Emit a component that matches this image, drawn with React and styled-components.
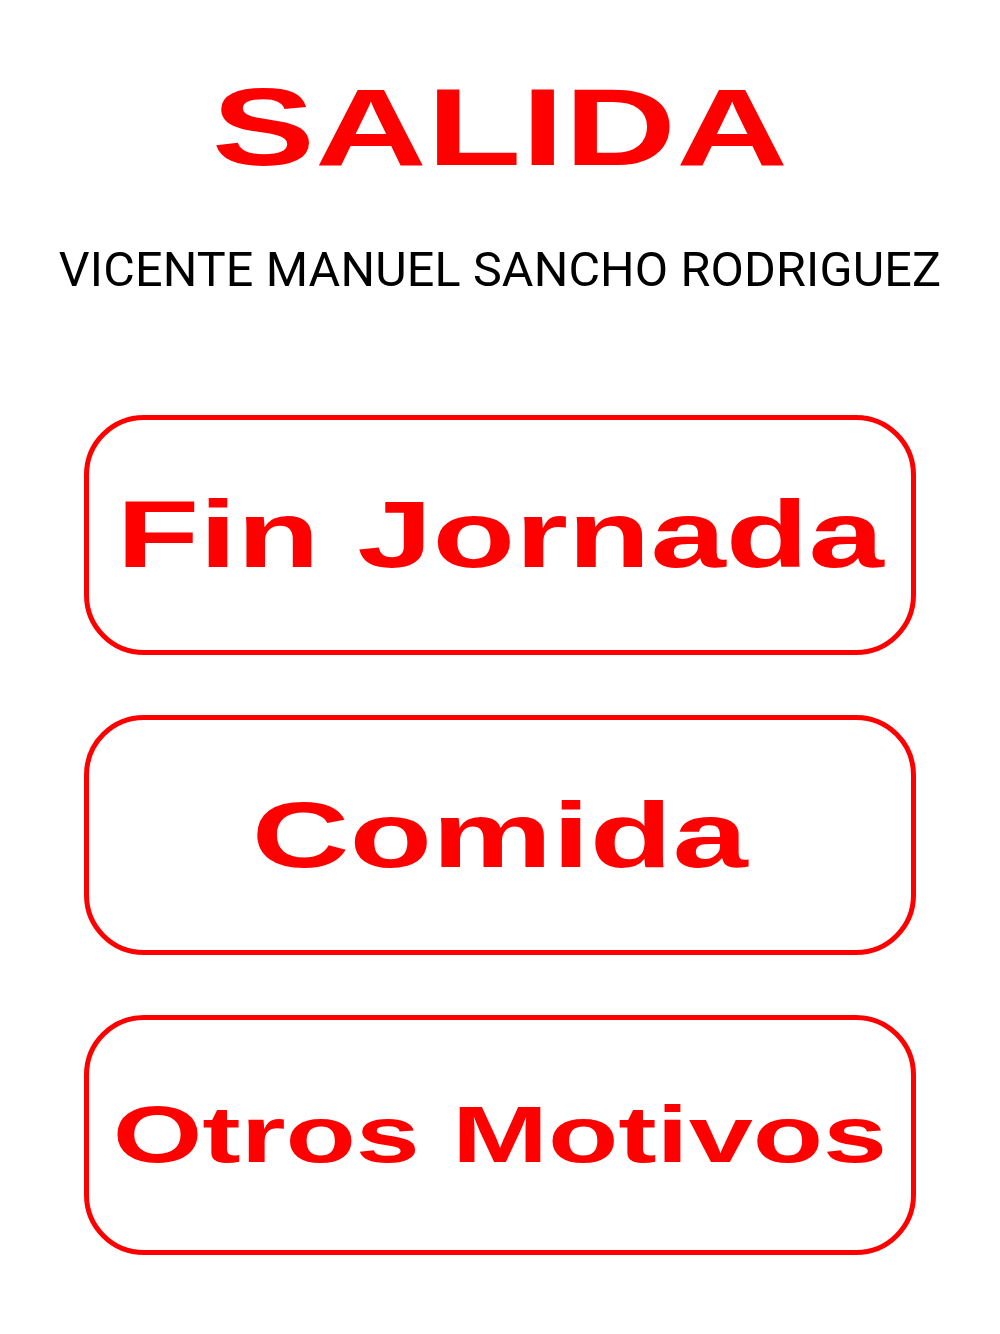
import React from "react";
import styled, { createGlobalStyle } from "styled-components";

const GlobalStyle = createGlobalStyle`
  html, body {
    margin: 0;
    padding: 0;
    background: #ffffff;
  }
  body {
    font-family: "Liberation Sans", Arial, sans-serif;
  }
`;

const Page = styled.div`
  width: 1000px;
  min-height: 1334px;
  display: flex;
  flex-direction: column;
  align-items: center;
  padding-top: 73px;
  box-sizing: border-box;
  background: #ffffff;
`;

const Title = styled.h1`
  margin: 0;
  font-family: "Liberation Sans", Arial, sans-serif;
  font-weight: 700;
  font-size: 109px;
  line-height: 1;
  color: #ff0000;
  transform: scaleX(1.42);
  letter-spacing: 0;
`;

const Name = styled.div`
  margin-top: 64px;
  font-family: Roboto, "Liberation Sans", sans-serif;
  font-size: 48.5px;
  letter-spacing: 0.15px;
  line-height: 1;
  color: #000000;
  white-space: nowrap;
`;

const ButtonList = styled.div`
  margin-top: 120px;
  display: flex;
  flex-direction: column;
  gap: 60px;
`;

const ActionButton = styled.button`
  width: 832px;
  height: 240px;
  box-sizing: border-box;
  border: 5px solid #ff0000;
  border-radius: 60px;
  background: #ffffff;
  display: flex;
  align-items: center;
  justify-content: center;
  padding: 0;
  cursor: pointer;
`;

const Label = styled.span`
  display: inline-block;
  font-family: "Liberation Sans", Arial, sans-serif;
  font-weight: 700;
  font-size: ${(p) => p.$size}px;
  line-height: 1;
  color: #ff0000;
  white-space: nowrap;
  transform: scaleX(${(p) => p.$scale});
`;

const actions = [
  { label: "Fin Jornada", size: 95, scale: 1.425 },
  { label: "Comida", size: 92, scale: 1.47 },
  { label: "Otros Motivos", size: 80, scale: 1.44 },
];

export default function App() {
  return (
    <>
      <GlobalStyle />
      <Page>
        <Title>SALIDA</Title>
        <Name>VICENTE MANUEL SANCHO RODRIGUEZ</Name>
        <ButtonList>
          {actions.map((a) => (
            <ActionButton key={a.label} type="button">
              <Label $size={a.size} $scale={a.scale}>
                {a.label}
              </Label>
            </ActionButton>
          ))}
        </ButtonList>
      </Page>
    </>
  );
}
